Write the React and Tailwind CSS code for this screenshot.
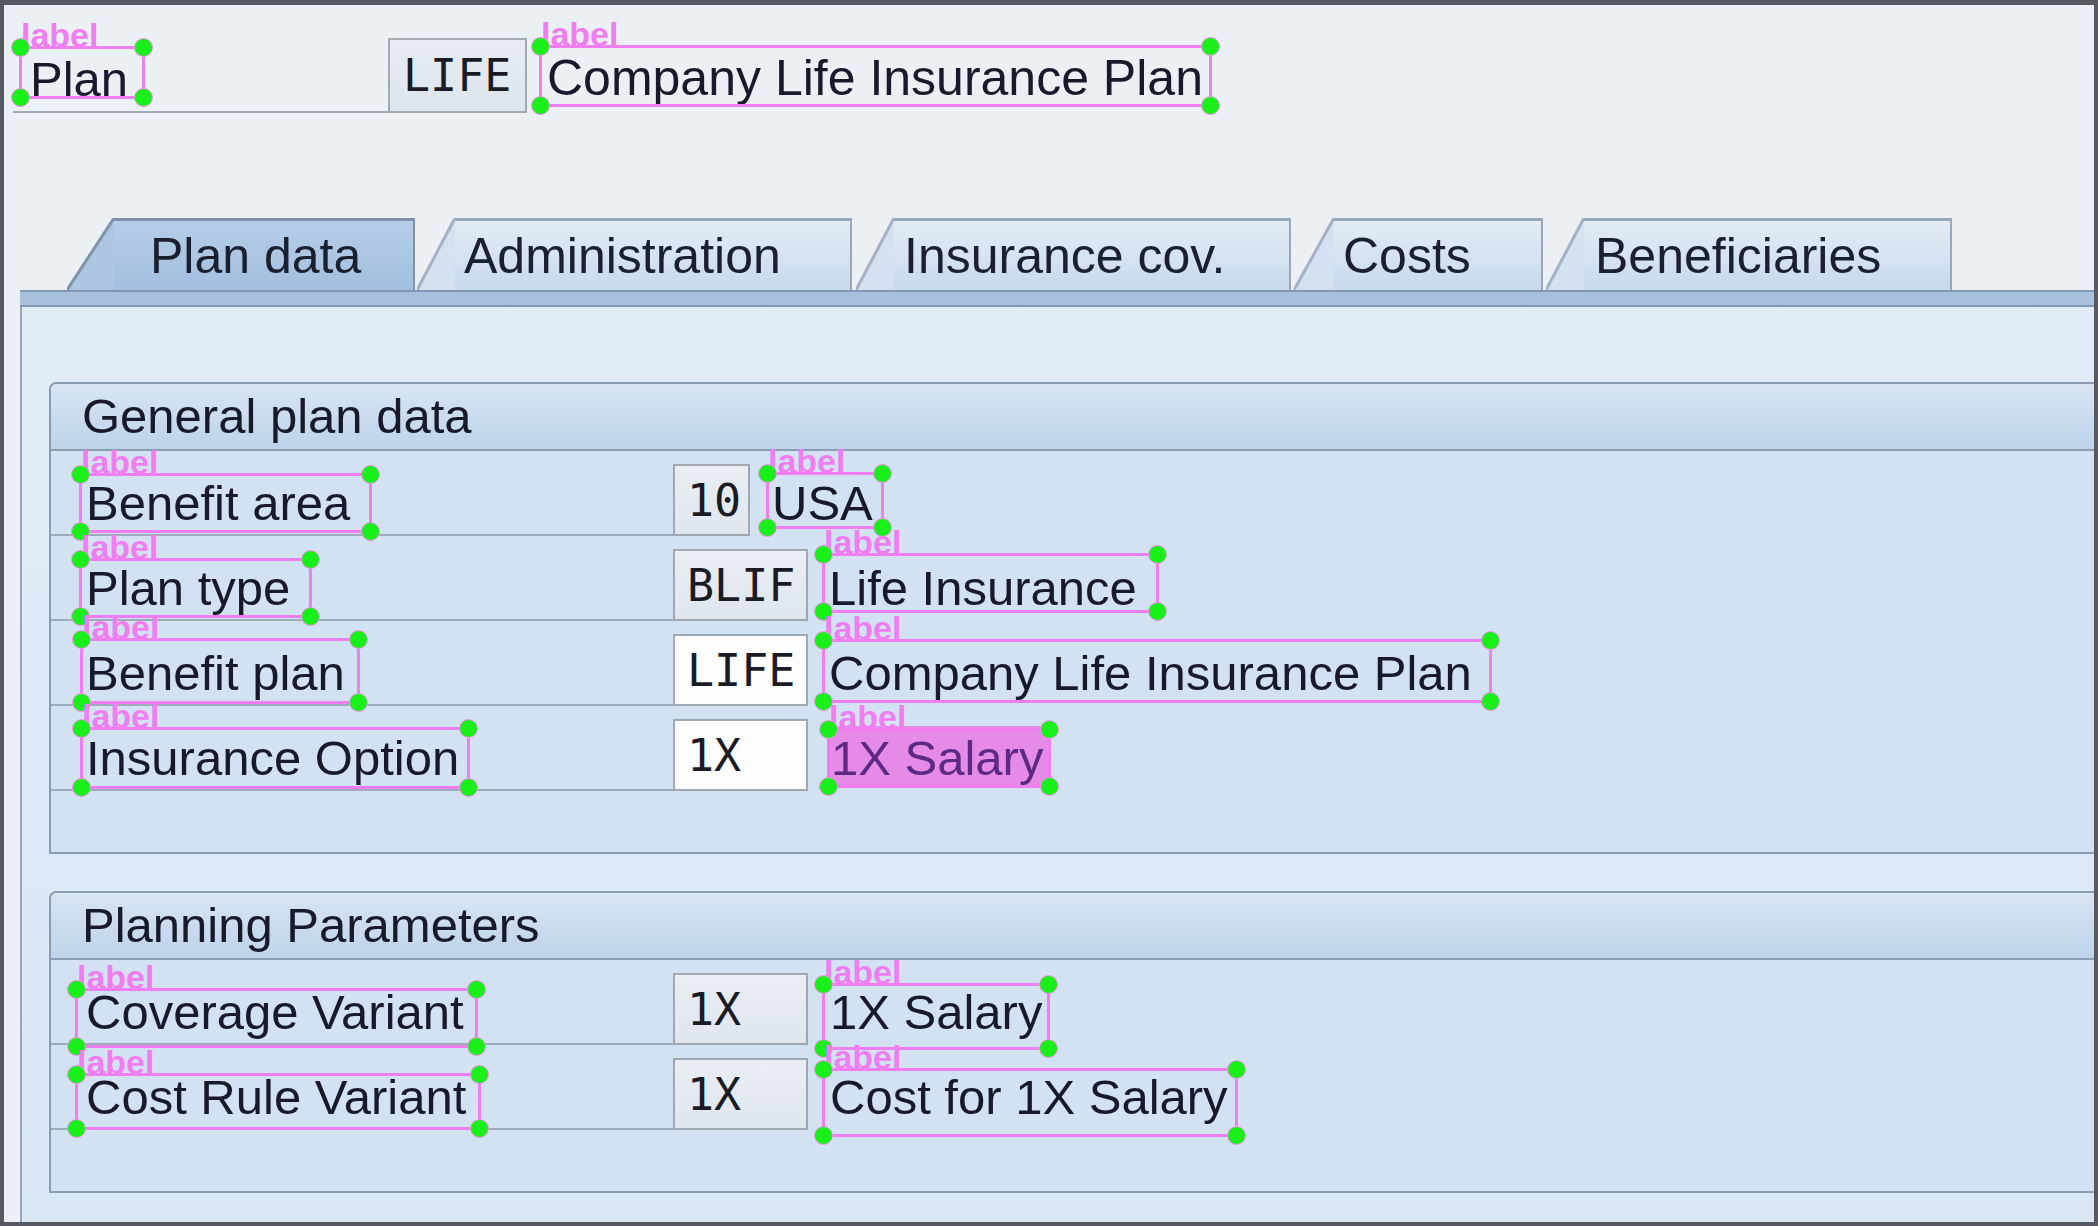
import React from "react";

const boxes = [
  { c: "left-[19px] top-[46px] w-[126px] h-[53px]" },
  { c: "left-[539px] top-[45px] w-[673px] h-[62px]" },
  { c: "left-[79px] top-[473px] w-[293px] h-[60px]" },
  { c: "left-[766px] top-[472px] w-[118px] h-[57px]" },
  { c: "left-[79px] top-[558px] w-[233px] h-[60px]" },
  { c: "left-[822px] top-[553px] w-[337px] h-[60px]" },
  { c: "left-[80px] top-[638px] w-[280px] h-[66px]" },
  { c: "left-[822px] top-[639px] w-[670px] h-[64px]" },
  { c: "left-[80px] top-[727px] w-[390px] h-[62px]" },
  { c: "left-[827px] top-[728px] w-[224px] h-[60px]" },
  { c: "left-[75px] top-[988px] w-[403px] h-[60px]" },
  { c: "left-[822px] top-[983px] w-[228px] h-[67px]" },
  { c: "left-[75px] top-[1073px] w-[406px] h-[57px]" },
  { c: "left-[822px] top-[1068px] w-[416px] h-[69px]" },
];

const dot =
  "absolute w-[19px] h-[19px] rounded-full bg-[#19f019] border-[1.5px] border-[#f392f3]";

function Annot({ c }) {
  return (
    <div className={`absolute ${c} border-[3px] border-[#f07ef0]`}>
      <span className="absolute left-[-1px] top-[-31px] text-[34px] leading-none font-bold text-[#f07ef0]">
        label
      </span>
      <span className={`${dot} left-[-11px] top-[-11px]`} />
      <span className={`${dot} right-[-11px] top-[-11px]`} />
      <span className={`${dot} left-[-11px] bottom-[-11px]`} />
      <span className={`${dot} right-[-11px] bottom-[-11px]`} />
    </div>
  );
}

function Field({ w, white, children }) {
  return (
    <div
      className={`${w} h-[72px] self-end shrink-0 border-2 border-[#9fa7b0] flex items-center pl-[12px] font-['DejaVu_Sans_Mono',monospace] text-[45px] leading-none text-[#1a1b24] ${
        white ? "bg-[#fdfdfd]" : "bg-[linear-gradient(#e9eef3,#dfe6ee)]"
      }`}
    >
      {children}
    </div>
  );
}

function Row({ label, code, fw, white, value, vml, filled }) {
  return (
    <div className="flex h-[85px]">
      <div className="w-[622px] shrink-0 border-b-2 border-[#9dabbb] pl-[35px] pt-[28px] text-[49px] leading-none whitespace-nowrap">
        {label}
      </div>
      <Field w={fw} white={white}>
        {code}
      </Field>
      {filled ? (
        <div className="ml-[19px] mt-[20px] h-[60px] w-[224px] shrink-0 bg-[#e58ae7] pl-[4px] pt-[8px] text-[49px] leading-none text-[#5c2a84] whitespace-nowrap">
          {value}
        </div>
      ) : (
        <div className={`${vml} pt-[28px] text-[49px] leading-none whitespace-nowrap`}>
          {value}
        </div>
      )}
    </div>
  );
}

function Group({ title, extra, children }) {
  return (
    <div
      className={`border-l-2 border-t-2 border-b-2 border-[#8b9db2] rounded-tl-[7px] bg-[#d3e2f2] pb-[61px] ${extra}`}
    >
      <div className="h-[67px] flex items-center pl-[31px] border-b-2 border-[#8b9db2] rounded-tl-[6px] bg-[linear-gradient(#d8e5f2,#bdd3ea)] text-[49px] leading-none whitespace-nowrap">
        {title}
      </div>
      {children}
    </div>
  );
}

function Tab({ label, slant, body, gap, selected }) {
  const slantBg = selected
    ? "bg-[linear-gradient(to_bottom_right,transparent_calc(50%_-_2px),#8193aa_calc(50%_-_1px),#8193aa_calc(50%_+_1px),#adc6e2_calc(50%_+_2px))]"
    : "bg-[linear-gradient(to_bottom_right,transparent_calc(50%_-_2px),#a3b1c2_calc(50%_-_1px),#a3b1c2_calc(50%_+_1px),#d3e1f0_calc(50%_+_2px))]";
  const bodyBg = selected
    ? "bg-[linear-gradient(#b5cde7,#a3bedf)] border-[#7f92a9]"
    : "bg-[linear-gradient(#e3ecf6,#c8d9ec)] border-[#98a8ba]";
  return (
    <div className={`flex h-[72px] shrink-0 ${gap}`}>
      <div className={`${slant} h-full ${slantBg}`} />
      <div
        className={`${body} h-full flex items-center border-t-[3px] border-r-2 ${bodyBg} text-[50px] leading-none text-[#1b2031] whitespace-nowrap`}
      >
        {label}
      </div>
    </div>
  );
}

export default function App() {
  return (
    <div className="relative w-[2098px] h-[1226px] overflow-hidden font-['Liberation_Sans',Arial,sans-serif] text-[#181a2b]">
      <div className="flex flex-col w-full h-full border-t-[5px] border-x-[4px] border-b-[4px] border-[#555a61] bg-[#ebf0f5]">
        {/* header */}
        <div className="flex items-start mt-[33px] h-[75px] shrink-0">
          <div className="ml-[9px] w-[375px] h-full shrink-0 border-b-2 border-[#a2acb7] pl-[17px] pt-[17px] text-[49px] leading-none">
            Plan
          </div>
          <div className="w-[139px] h-full shrink-0 border-2 border-[#a1a9b2] bg-[linear-gradient(#e6ecf2,#dde5ed)] flex items-center pl-[13px] font-['DejaVu_Sans_Mono',monospace] text-[45px] leading-none text-[#1a1b24]">
            LIFE
          </div>
          <div className="ml-[20px] mt-[15px] text-[50px] leading-none whitespace-nowrap">
            Company Life Insurance Plan
          </div>
        </div>

        {/* tabs */}
        <div className="flex items-end mt-[105px] ml-[63px] h-[72px] shrink-0">
          <Tab label="Plan data" slant="w-[47px]" body="w-[301px] pl-[36px]" gap="" selected />
          <Tab label="Administration" slant="w-[38px]" body="w-[397px] pl-[9px]" gap="ml-[2px]" />
          <Tab label="Insurance cov." slant="w-[38px]" body="w-[397px] pl-[10px]" gap="ml-[4px]" />
          <Tab label="Costs" slant="w-[40px]" body="w-[209px] pl-[9px]" gap="ml-[3px]" />
          <Tab label="Beneficiaries" slant="w-[38px]" body="w-[368px] pl-[11px]" gap="ml-[3px]" />
        </div>
        <div className="ml-[16px] h-[17px] shrink-0 border-y-2 border-[#8098b4] bg-[#a8c0dc]" />

        {/* content panel */}
        <div className="flex-1 min-h-0 ml-[16px] border-l-2 border-[#97a6b8] bg-[linear-gradient(#e1ecf8,#dae7f5)] pt-[75px] pl-[27px] overflow-hidden">
          <Group title="General plan data" extra="">
            <Row label="Benefit area" code="10" fw="w-[77px]" value="USA" vml="ml-[22px]" />
            <Row label="Plan type" code="BLIF" fw="w-[135px]" value="Life Insurance" vml="ml-[21px]" />
            <Row label="Benefit plan" code="LIFE" fw="w-[135px]" white value="Company Life Insurance Plan" vml="ml-[21px]" />
            <Row label="Insurance Option" code="1X" fw="w-[135px]" white value="1X Salary" filled />
          </Group>
          <Group title="Planning Parameters" extra="mt-[37px]">
            <Row label="Coverage Variant" code="1X" fw="w-[135px]" value="1X Salary" vml="ml-[22px]" />
            <Row label="Cost Rule Variant" code="1X" fw="w-[135px]" value="Cost for 1X Salary" vml="ml-[22px]" />
          </Group>
        </div>
      </div>

      {/* annotation overlay */}
      {boxes.map((b, i) => (
        <Annot key={i} c={b.c} />
      ))}
    </div>
  );
}
